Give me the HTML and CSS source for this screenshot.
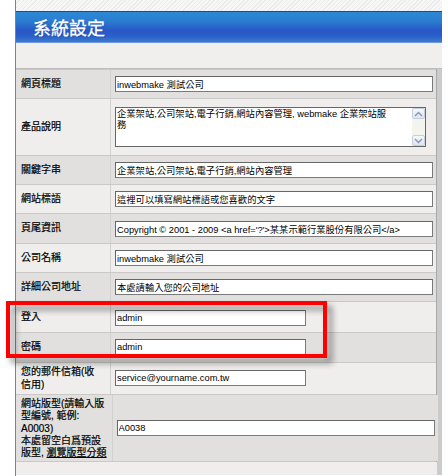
FILE: index.html
```html
<!DOCTYPE html>
<html lang="zh-Hant">
<head>
<meta charset="utf-8">
<title>系統設定</title>
<link rel="stylesheet" href="styles.css">
</head>
<body>
<div class="page">
  <div class="topstrip"></div>
  <div class="header"><h1 class="title">系統設定</h1></div>
  <div class="subbar"></div>
  <div class="formwrap">
    <div class="form">
      <div class="row dark">
        <div class="lab">網頁標題</div>
        <div class="val"><input class="inp" type="text" value="inwebmake 測試公司"></div>
      </div>
      <div class="row light">
        <div class="lab">產品說明</div>
        <div class="val tall">
          <div class="ta">
            <div class="ta-text">企業架站,公司架站,電子行銷,網站內容管理, webmake 企業架站服<br>務</div>
            <div class="sb">
              <div class="sb-btn"><svg width="9" height="6" viewBox="0 0 9 6"><polyline points="1,5 4.5,1.5 8,5" fill="none" stroke="#8796b0" stroke-width="1.4"/></svg></div>
              <div class="sb-track"></div>
              <div class="sb-btn"><svg width="9" height="6" viewBox="0 0 9 6"><polyline points="1,1 4.5,4.5 8,1" fill="none" stroke="#8796b0" stroke-width="1.4"/></svg></div>
            </div>
          </div>
        </div>
      </div>
      <div class="row dark">
        <div class="lab">關鍵字串</div>
        <div class="val"><input class="inp" type="text" value="企業架站,公司架站,電子行銷,網站內容管理"></div>
      </div>
      <div class="row light">
        <div class="lab">網站標語</div>
        <div class="val"><input class="inp" type="text" value="這裡可以填寫網站標語或您喜歡的文字"></div>
      </div>
      <div class="row dark">
        <div class="lab">頁尾資訊</div>
        <div class="val v30"><input class="inp" type="text" value="Copyright © 2001 - 2009 <a href='?'>某某示範行業股份有限公司</a>"></div>
      </div>
      <div class="row light">
        <div class="lab">公司名稱</div>
        <div class="val"><input class="inp" type="text" value="inwebmake 測試公司"></div>
      </div>
      <div class="row dark">
        <div class="lab">詳細公司地址</div>
        <div class="val"><input class="inp" type="text" value="本處請輸入您的公司地址"></div>
      </div>
      <div class="row light">
        <div class="lab">登入</div>
        <div class="val v31"><input class="inp short" type="text" value="admin"></div>
      </div>
      <div class="row dark">
        <div class="lab">密碼</div>
        <div class="val v30b"><input class="inp short" type="text" value="admin"></div>
      </div>
      <div class="row light">
        <div class="lab">您的郵件信箱(收<br>信用)</div>
        <div class="val v32"><input class="inp short" type="text" value="service@yourname.com.tw"></div>
      </div>
      <div class="row dark">
        <div class="lab multi">網站版型(請輸入版<br>型編號, 範例:<br>A0003)<br>本處留空白爲預設<br>版型, <a class="lnk" href="#">瀏覽版型分類</a></div>
        <div class="val"><input class="inp" type="text" value="A0038"></div>
      </div>
    </div>
    <div class="foot"></div>
  </div>
</div>
<div class="callout"></div>
</body>
</html>
```

FILE: styles.css
```css
html, body {
  margin: 0;
  padding: 0;
  background: #ffffff;
}
body {
  position: relative;
  font-family: "Liberation Sans", "Noto Sans CJK TC", sans-serif;
  color: #111;
}
.page {
  margin-left: 15px;
  width: 427px;
  border-left: 1px solid #5b86d6;
  min-height: 476px;
  box-sizing: border-box;
}
.topstrip {
  height: 11px;
  background: repeating-linear-gradient(135deg, #f7f7f7 0 2px, #ebebeb 2px 3px);
}
.header {
  height: 30px;
  border-top: 1px solid #5a3f2c;
  border-bottom: 1px solid #6f98d8;
  background: linear-gradient(to bottom, #2d88d5 0%, #2a7dd0 30%, #2957c7 62%, #2a5ec8 80%, #3a7ccf 100%);
  display: flex;
  align-items: center;
}
.title {
  margin: 0;
  padding-left: 17px;
  font-family: "Noto Sans CJK TC", sans-serif;
  font-size: 18px;
  font-weight: 400;
  line-height: 22px;
  color: #ffffff;
  -webkit-text-stroke: 0.3px #ffffff;
  text-shadow: 1px 1px 0 rgba(10, 30, 90, 0.35);
}
.subbar {
  height: 25px;
  background: #f0efed;
  border-bottom: 1px solid #bdbdbd;
}
.formwrap {
  border-right: 5px solid #cbcbcb;
}
.form {
  border-right: 1px solid #a8a8a8;
}
.row {
  display: flex;
  border-top: 1px solid #cbc9c7;
}
.row:last-child {
  border-bottom: 1px solid #cbc9c7;
}
.row.dark .lab,
.row.dark .val {
  background: #e2e0de;
}
.row.light .lab,
.row.light .val {
  background: #efeeec;
}
.lab {
  flex: 0 0 95px;
  box-sizing: border-box;
  border-right: 1px solid #d3d1cf;
  padding: 2px 5px;
  display: flex;
  align-items: center;
  font-size: 10px;
  line-height: 12.5px;
  color: #000;
  -webkit-text-stroke: 0.2px #000;
  white-space: nowrap;
}
.lab.multi {
  display: block;
  padding: 3px 5px 2px;
  line-height: 12.3px;
}
.lnk {
  color: #000;
  text-decoration: underline;
}
.val {
  flex: 1;
  display: flex;
  align-items: center;
  padding: 6px 3px 6px 4px;
}
.val.tall {
  padding: 8px 3px 8px 4px;
}
.val.v30 {
  padding: 7px 3px 6px 4px;
}
.val.v31 {
  padding: 8px 3px 6px 4px;
}
.val.v30b {
  padding: 6px 3px 7px 4px;
}
.val.v32 {
  padding: 7px 3px 8px 4px;
}
.inp {
  box-sizing: border-box;
  width: 318px;
  height: 16px;
  margin: 0;
  padding: 0 1px;
  border: 1px solid #666666;
  border-right-color: #7a7a7a;
  border-bottom-color: #7a7a7a;
  background: #ffffff;
  font-family: "Liberation Sans", "Noto Sans CJK TC", sans-serif;
  font-size: 9.3px;
  color: #000;
  outline: none;
}
.inp.short {
  width: 191px;
}
.ta {
  box-sizing: border-box;
  width: 311px;
  height: 40px;
  border: 1px solid #666666;
  background: #ffffff;
  display: flex;
}
.ta-text {
  flex: 1;
  padding: 1px 1px;
  font-size: 9.3px;
  line-height: 11px;
  white-space: nowrap;
  overflow: hidden;
  color: #000;
}
.sb {
  width: 13px;
  display: flex;
  flex-direction: column;
  background: #f4f4ef;
}
.sb-btn {
  box-sizing: border-box;
  height: 11px;
  border: 1px solid #c6cfdf;
  border-radius: 2px;
  background: linear-gradient(to bottom, #f5f7fb, #dfe5ee);
  display: flex;
  align-items: center;
  justify-content: center;
}
.sb-track {
  flex: 1;
}
.foot {
  height: 13px;
  background: #efeeec;
}
.callout {
  position: absolute;
  left: 6px;
  top: 301px;
  width: 321px;
  height: 57px;
  box-sizing: border-box;
  border: 4px solid #ff0000;
  filter: drop-shadow(5px 5px 3px rgba(0, 0, 0, 0.45));
}
```
